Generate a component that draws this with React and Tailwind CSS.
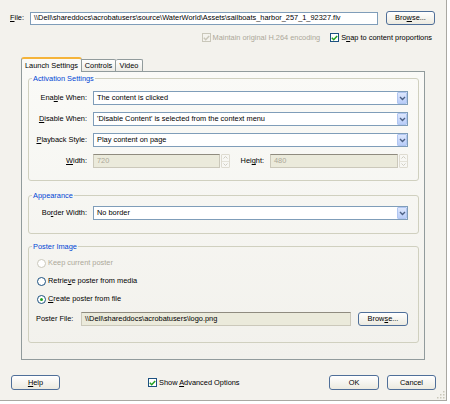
import React from "react";

const Chevron = () => (
  <svg width="7" height="5" viewBox="0 0 7 5">
    <path d="M1 1 L3.5 3.5 L6 1" fill="none" stroke="#4d6185" strokeWidth="1.4" />
  </svg>
);

function Select({ value }) {
  return (
    <div className="w-[315px] h-[14px] flex items-center border border-[#7f9db9] bg-white">
      <span className="flex-1 pl-[3px] truncate">{value}</span>
      <div className="w-[10px] h-[12px] flex items-center justify-center bg-linear-to-b from-[#dde7fd] to-[#b9cdf8] border border-[#b1c6f1] rounded-[1px]">
        <Chevron />
      </div>
    </div>
  );
}

function Spinner() {
  return (
    <div className="w-[9px] h-[14px] flex flex-col border border-[#dedbd0] rounded-[1px]">
      <div className="flex-1 flex items-center justify-center border-b border-[#e4e2d8]">
        <svg width="5" height="3" viewBox="0 0 5 3"><path d="M0.5 2.5 L2.5 0.5 L4.5 2.5" fill="none" stroke="#cfcdc2" /></svg>
      </div>
      <div className="flex-1 flex items-center justify-center">
        <svg width="5" height="3" viewBox="0 0 5 3"><path d="M0.5 0.5 L2.5 2.5 L4.5 0.5" fill="none" stroke="#cfcdc2" /></svg>
      </div>
    </div>
  );
}

function Btn({ className, children }) {
  return (
    <div className={`h-[14px] flex items-center justify-center border border-[#4f6f99] rounded-[3px] bg-linear-to-b from-white to-[#eceae0] ${className}`}>
      {children}
    </div>
  );
}

function Check({ disabled }) {
  const box = disabled ? "border-[#c9c7ba] bg-[#f4f3ee]" : "border-[#1c5180] bg-white";
  const mark = disabled ? "#c9c7ba" : "#21a121";
  return (
    <div className={`w-[9px] h-[9px] border flex items-center justify-center ${box}`}>
      <svg width="7" height="6" viewBox="0 0 7 6">
        <path d="M0.8 2.8 L2.7 4.7 L6.2 0.9" fill="none" stroke={mark} strokeWidth="1.5" />
      </svg>
    </div>
  );
}

function Radio({ checked, disabled }) {
  const ring = disabled ? "border-[#cac8bb]" : "border-[#1c5180]";
  return (
    <div className={`w-[9px] h-[9px] rounded-full border bg-white flex items-center justify-center ${ring}`}>
      {checked && <div className="w-[3px] h-[3px] rounded-full bg-[#21a121]" />}
    </div>
  );
}

function Row({ label, children }) {
  return (
    <div className="flex items-center h-[14px]">
      <div className="w-[58px] mr-[6px] text-right whitespace-nowrap">{label}</div>
      {children}
    </div>
  );
}

function Group({ title, className, children }) {
  return (
    <fieldset className={`w-[391px] border border-[#d0d0bf] rounded-[3px] ${className}`}>
      <legend className="ml-[3px] px-[1px] text-[#0046d5] leading-[9px]">{title}</legend>
      {children}
    </fieldset>
  );
}

export default function App() {
  return (
    <div className="w-[450px] h-[404px] bg-white font-['Liberation_Sans',Arial,sans-serif] text-[7.4px] text-black leading-none">
      <div className="relative w-[447px] h-[401px] bg-[#f3f2ed] border-r border-b border-[#a9a8a2]">
        {/* file row */}
        <div className="flex items-center pt-[11px] pl-[10px]">
          <div className="w-[20px]"><u>F</u>ile:</div>
          <div className="w-[348px] h-[13px] flex items-center border border-[#7f9db9] bg-white px-[3px] whitespace-nowrap overflow-hidden">
            {"\\\\Dell\\shareddocs\\acrobatusers\\source\\WaterWorld\\Assets\\sailboats_harbor_257_1_92327.flv"}
          </div>
          <Btn className="w-[49px] ml-[8px]">Bro<u>w</u>se...</Btn>
        </div>

        {/* options row */}
        <div className="flex items-center justify-end h-[9px] mt-[8px] pr-[14px]">
          <Check disabled />
          <span className="ml-[2px] text-[#aca899]">Maintain original H.264 encoding</span>
          <div className="ml-[10px]"><Check /></div>
          <span className="ml-[2px]">S<u>n</u>ap to content proportions</span>
        </div>

        {/* tabs */}
        <div className="flex items-end h-[14px] mt-[15px] ml-[21px]">
          <div className="relative z-10 w-[61px] h-[15px] mb-[-1px] flex items-center justify-center bg-[#fafaf7] border-x border-[#919b9c] border-t-[2px] border-t-[#f5b43a] rounded-t-[3px]">
            Launch Settings
          </div>
          <div className="w-[34px] h-[12px] flex items-center justify-center bg-linear-to-b from-white to-[#ecebe5] border-t border-r border-[#919b9c] rounded-tr-[2px]">
            Controls
          </div>
          <div className="w-[27px] h-[12px] flex items-center justify-center bg-linear-to-b from-white to-[#ecebe5] border-t border-r border-[#919b9c] rounded-t-[2px]">
            Video
          </div>
        </div>

        {/* panel */}
        <div className="w-[404px] h-[289px] ml-[21px] border border-[#919b9c] bg-linear-to-b from-[#fafaf7] to-[#f2f1ec] pl-[6px] pt-[2px]">
          <Group title="Activation Settings" className="pt-[8px] pb-[12px]">
            <div className="flex flex-col gap-[7px]">
              <Row label={<>Ena<u>b</u>le When:</>}>
                <Select value="The content is clicked" />
              </Row>
              <Row label={<><u>D</u>isable When:</>}>
                <Select value="'Disable Content' is selected from the context menu" />
              </Row>
              <Row label={<><u>P</u>layback Style:</>}>
                <Select value="Play content on page" />
              </Row>
              <Row label={<><u>W</u>idth:</>}>
                <div className="w-[127px] h-[14px] flex items-center px-[3px] bg-[#ebeadb] border border-[#cbc8ba] border-t-[#8f8b7f] text-[#aca899]">720</div>
                <div className="ml-[1px]"><Spinner /></div>
                <div className="w-[40px] text-right pr-[6px]">Hei<u>g</u>ht:</div>
                <div className="w-[128px] h-[14px] flex items-center px-[3px] bg-[#ebeadb] border border-[#cbc8ba] border-t-[#8f8b7f] text-[#aca899]">480</div>
                <div className="ml-[1px]"><Spinner /></div>
              </Row>
            </div>
          </Group>

          <Group title="Appearance" className="mt-[10px] pt-[6px] pb-[13px]">
            <Row label={<>Bo<u>r</u>der Width:</>}>
              <Select value="No border" />
            </Row>
          </Group>

          <Group title="Poster Image" className="mt-[8px] pt-[7px] pb-[16px]">
            <div className="flex flex-col gap-[8px] pl-[8px]">
              <div className="flex items-center h-[10px]">
                <Radio disabled />
                <span className="ml-[2px] text-[#aca899]">Keep current poster</span>
              </div>
              <div className="flex items-center h-[10px]">
                <Radio />
                <span className="ml-[2px]">Retrie<u>v</u>e poster from media</span>
              </div>
              <div className="flex items-center h-[10px]">
                <Radio checked />
                <span className="ml-[2px]"><u>C</u>reate poster from file</span>
              </div>
            </div>
            <div className="flex items-center mt-[8px] pl-[7px]">
              <div className="w-[45px]">Poster File:</div>
              <div className="w-[270px] h-[14px] flex items-center px-[3px] bg-[#ebeadb] border border-[#cbc8ba] border-t-[#8f8b7f] whitespace-nowrap overflow-hidden">
                {"\\\\Dell\\shareddocs\\acrobatusers\\logo.png"}
              </div>
              <Btn className="w-[50px] ml-[7px]">Brow<u>s</u>e...</Btn>
            </div>
          </Group>
        </div>

        {/* bottom buttons */}
        <div className="flex items-center mt-[15px] pl-[11px] pr-[10px]">
          <Btn className="w-[49px] h-[15px]"><u>H</u>elp</Btn>
          <div className="ml-[88px] flex items-center">
            <Check />
            <span className="ml-[2px]">Show <u>A</u>dvanced Options</span>
          </div>
          <div className="flex-1" />
          <Btn className="w-[50px] h-[15px]">OK</Btn>
          <Btn className="w-[49px] h-[15px] ml-[8px]">Cancel</Btn>
        </div>

        {/* resize grip */}
        <svg className="absolute right-[1px] bottom-[1px]" width="8" height="8" viewBox="0 0 8 8">
          <rect x="6" y="0" width="1.5" height="1.5" fill="#c9c7ba" />
          <rect x="3" y="3" width="1.5" height="1.5" fill="#c9c7ba" />
          <rect x="6" y="3" width="1.5" height="1.5" fill="#c9c7ba" />
          <rect x="0" y="6" width="1.5" height="1.5" fill="#c9c7ba" />
          <rect x="3" y="6" width="1.5" height="1.5" fill="#c9c7ba" />
          <rect x="6" y="6" width="1.5" height="1.5" fill="#c9c7ba" />
        </svg>
      </div>
    </div>
  );
}
